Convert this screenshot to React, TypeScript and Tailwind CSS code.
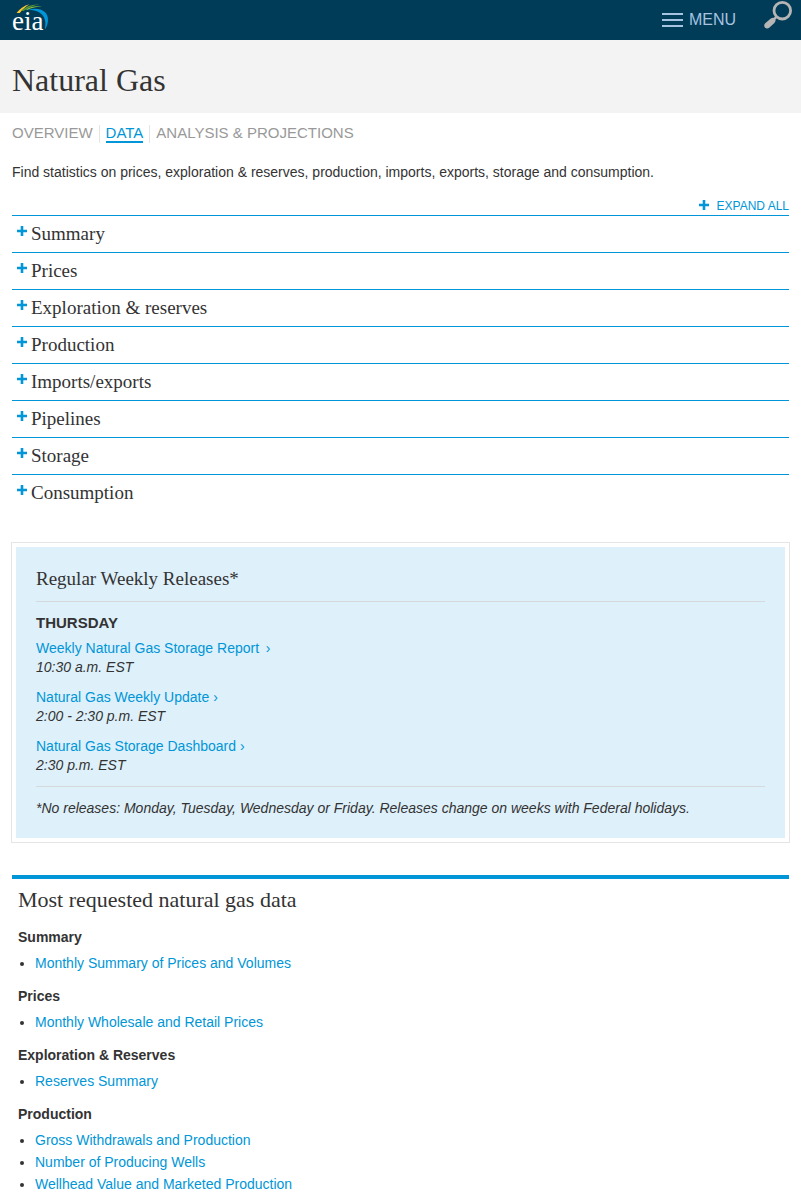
import { useState } from "react";

const topics = [
  "Summary",
  "Prices",
  "Exploration & reserves",
  "Production",
  "Imports/exports",
  "Pipelines",
  "Storage",
  "Consumption",
];

const releases = [
  { name: "Weekly Natural Gas Storage Report\u2009 ›", time: "10:30 a.m. EST" },
  { name: "Natural Gas Weekly Update ›", time: "2:00 - 2:30 p.m. EST" },
  { name: "Natural Gas Storage Dashboard ›", time: "2:30 p.m. EST" },
];

const requested = [
  { title: "Summary", links: ["Monthly Summary of Prices and Volumes"] },
  { title: "Prices", links: ["Monthly Wholesale and Retail Prices"] },
  { title: "Exploration & Reserves", links: ["Reserves Summary"] },
  {
    title: "Production",
    links: [
      "Gross Withdrawals and Production",
      "Number of Producing Wells",
      "Wellhead Value and Marketed Production",
    ],
  },
];

const serif = "font-['Liberation_Serif',serif]";

function Plus({ open = false }: { open?: boolean }) {
  return (
    <svg width="10" height="10" viewBox="0 0 10 10" className="shrink-0" aria-hidden="true">
      <path d={open ? "M0 3.7h10v2.6H0z" : "M3.7 0h2.6v3.7H10v2.6H6.3V10H3.7V6.3H0V3.7h3.7z"} fill="#0096d7" />
    </svg>
  );
}

function Logo() {
  return (
    <svg width="40" height="36" viewBox="0 0 40 36" className="overflow-visible" aria-hidden="true">
      <path d="M4.500 9C8 4.500 12 1.500 17.500 .2C14 2.500 10.500 5 7.800 9Z" fill="#ffc72c" />
      <path d="M9.500 6.800C14 2.300 20 .2 27.500 .6C21.500 1.500 16.500 3.300 11.500 7Z" fill="#5d9732" />
      <path d="M14 5.400C19 2.300 24.500 1.500 30 2.600C24.500 2.900 19.500 3.800 15 6Z" fill="#8cc63f" />
      <path d="M16 6C26 2.300 36.500 6.500 36 16C35.800 20 34.800 23 32.800 25.500C33.500 21 34 17 31.800 13C29 8 23.500 5.700 16 6Z" fill="#0096d7" />
      <text x="0" y="26" fontSize="27" fill="#fff" className="font-['Liberation_Serif',serif]">
        eia
      </text>
    </svg>
  );
}

function Search() {
  return (
    <svg width="30" height="30" viewBox="0 0 30 30" aria-hidden="true">
      <circle cx="19.300" cy="10.700" r="8.300" fill="none" stroke="#b5b5b5" strokeWidth="2.800" />
      <path
        d="M12.800 15.500L14.600 17.400L12.500 19.600C12.800 21 12.300 22 11.400 22.900L6.500 27.500C5 28.900 3 28.800 1.900 27.500C.8 26.100 1 24.500 2.500 23.100L7.500 18.700C8.500 17.900 9.800 17.600 10.900 17.800Z"
        fill="#b5b5b5"
      />
    </svg>
  );
}

export default function App() {
  const [open, setOpen] = useState<string[]>([]);
  const allOpen = open.length === topics.length;
  const toggle = (topic: string) =>
    setOpen(open.includes(topic) ? open.filter((t) => t !== topic) : [...open, topic]);

  return (
    <div className="bg-white font-['Liberation_Sans',Arial,sans-serif] text-sm text-[#333]">
      <header className="flex h-10 items-start justify-between bg-[#003b57] pr-2 pl-3">
        <a href="#" aria-label="eia" className="pt-1">
          <Logo />
        </a>
        <div className="flex items-start gap-[27px]">
          <button className="flex h-10 items-center gap-1.5 text-base text-[#a7c3e0]">
            <svg width="21" height="14" viewBox="0 0 21 14" aria-hidden="true">
              <path d="M0 1h21M0 7h21M0 13h21" stroke="currentColor" strokeWidth="2" />
            </svg>
            MENU
          </button>
          <button aria-label="Search" className="h-10 pb-2.5">
            <Search />
          </button>
        </div>
      </header>

      <div className="bg-[#f3f3f3] px-3 pt-5 pb-[13px]">
        <h1 className={`text-[32px] leading-10 ${serif}`}>Natural Gas</h1>
      </div>

      <nav className="flex px-3 pt-3 text-[15px] leading-4 text-[#999]">
        <a href="#" className="mr-1.5 h-4">OVERVIEW</a>
        <a href="#" aria-current="page" className="border-l border-[#e5e5e5] px-1.5">
          <span className="block border-b-2 border-[#0096d7] text-[#0096d7]">DATA</span>
        </a>
        <a href="#" className="border-l border-[#e5e5e5] pl-1.5">ANALYSIS &amp; PROJECTIONS</a>
      </nav>

      <main>
        <section className="px-3">
          <p className="pt-[19px] leading-5">
            Find statistics on prices, exploration &amp; reserves, production, imports, exports, storage and
            consumption.
          </p>
          <div className="flex justify-end pt-4 pb-px">
            <button
              onClick={() => setOpen(allOpen ? [] : topics)}
              className="flex items-start gap-2 text-xs leading-4 text-[#0096d7]"
            >
              <span className="pt-0.5"><Plus open={allOpen} /></span>
              {allOpen ? "COLLAPSE ALL" : "EXPAND ALL"}
            </button>
          </div>
          <ul>
            {topics.map((topic) => (
              <li key={topic} className="border-t border-[#0096d7]">
                <button
                  onClick={() => toggle(topic)}
                  aria-expanded={open.includes(topic)}
                  className={`flex h-9 w-full items-start gap-1 pl-[5px] text-left text-[19px] leading-9 ${serif}`}
                >
                  <span className="flex pt-2.5"><Plus open={open.includes(topic)} /></span>
                  {topic}
                </button>
              </li>
            ))}
          </ul>
        </section>

        <section className="px-[11px] pt-[31px]">
          <div className="border border-[#e5e5e5] p-1">
            <div className="bg-[#def0fa] p-5">
              <h2 className={`border-b border-[#d5d9db] pb-2.5 text-[19px] leading-6 ${serif}`}>
                Regular Weekly Releases*
              </h2>
              <h3 className="pt-[11px] pb-1.5 text-[15px] leading-5 font-bold">THURSDAY</h3>
              <ul className="space-y-[11px] pb-[11px]">
                {releases.map((r) => (
                  <li key={r.name} className="leading-[19px]">
                    <a href="#" className="text-[#0096d7]">{r.name}</a>
                    <p className="italic">{r.time}</p>
                  </li>
                ))}
              </ul>
              <p className="border-t border-[#d5d9db] pt-[11px] leading-5 italic">
                *No releases: Monday, Tuesday, Wednesday or Friday. Releases change on weeks with Federal holidays.
              </p>
            </div>
          </div>
        </section>

        <section className="px-3 pt-8">
          <div className="border-t-4 border-[#0096d7] px-1.5 pt-[7px]">
            <h2 className={`pb-3 text-[22px] leading-7 ${serif}`}>Most requested natural gas data</h2>
            {requested.map((group) => (
              <div key={group.title} className="pb-[11px]">
                <h3 className="pb-1 leading-[22px] font-bold">{group.title}</h3>
                <ul className="list-disc pl-[17px]">
                  {group.links.map((link) => (
                    <li key={link} className="leading-[22px]">
                      <a href="#" className="text-[#0096d7]">{link}</a>
                    </li>
                  ))}
                </ul>
              </div>
            ))}
          </div>
        </section>
      </main>
    </div>
  );
}
